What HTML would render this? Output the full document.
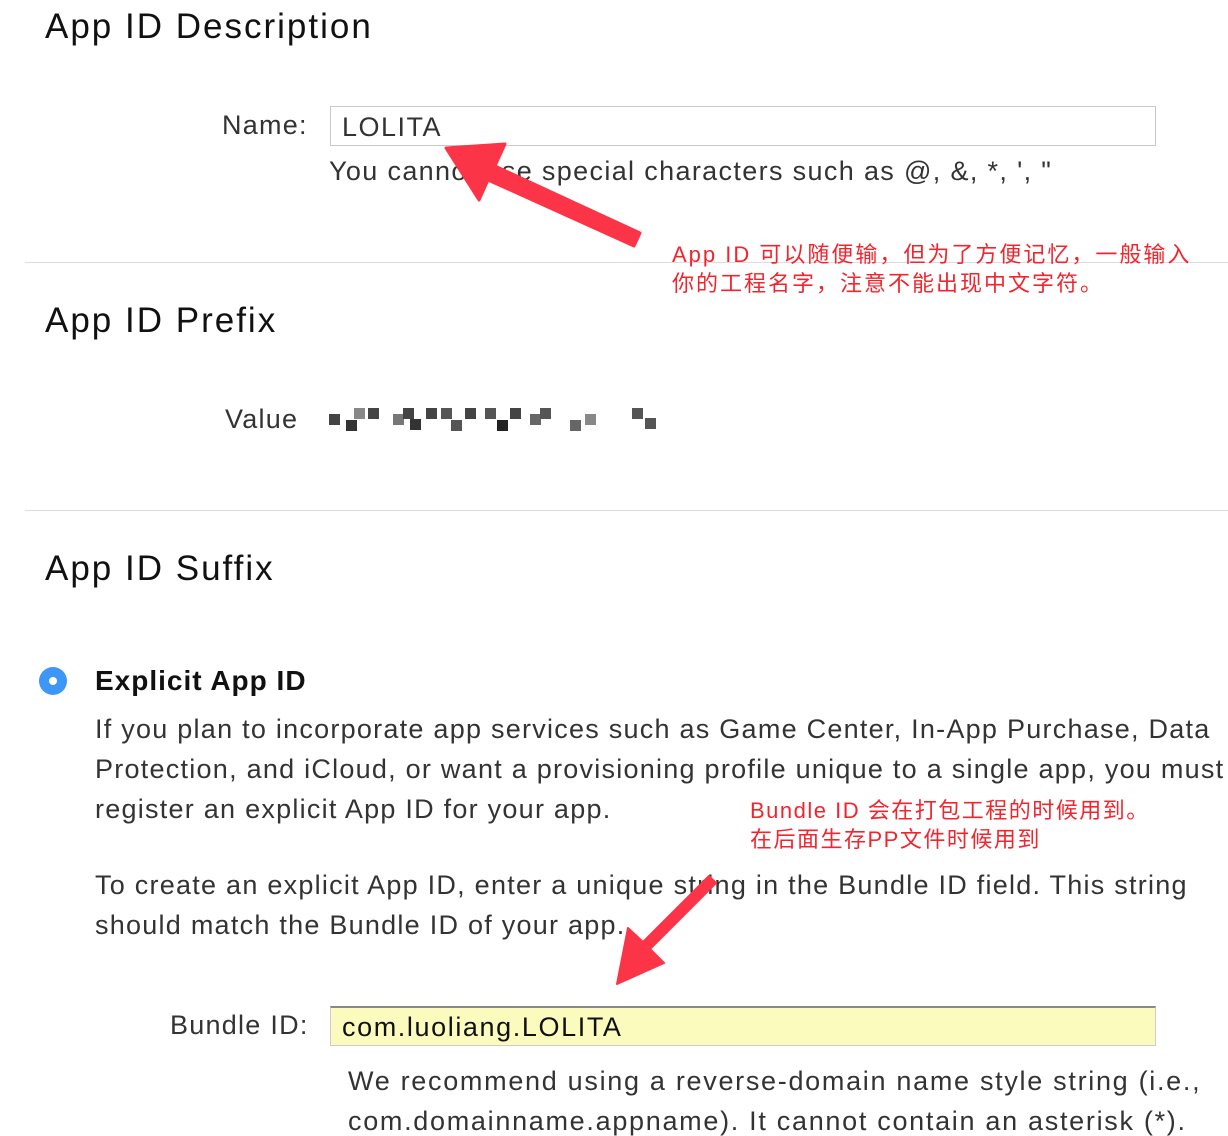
<!DOCTYPE html>
<html><head><meta charset="utf-8"><style>
body{margin:0;width:1228px;height:1136px;background:#fff;position:relative;overflow:hidden;font-family:"Liberation Sans","Noto Sans CJK SC",sans-serif;color:#333}
.a{position:absolute;white-space:nowrap;line-height:1}
h1{position:absolute;margin:0;font-weight:normal;font-size:35px;color:#111;white-space:nowrap;line-height:1;letter-spacing:2px}
.t{font-size:27px;color:#333;letter-spacing:1.25px}
.hr{position:absolute;left:25px;right:0;height:1px;background:#ddd}
.in{position:absolute;left:330px;width:824px;height:38px;border:1px solid #c8c8c8;box-sizing:content-box}
.red{position:absolute;color:#f2252e;font-size:22px;line-height:29px;white-space:nowrap;font-family:"Liberation Sans","Noto Sans CJK SC",sans-serif}
.px{position:absolute;width:11px;height:11px}
</style></head><body>
<h1 style="left:45px;top:9px">App ID Description</h1>
<div class="a t" style="left:222px;top:112px">Name:</div>
<div class="in" style="top:106px"></div>
<div class="a t" style="left:342px;top:114px;color:#333;letter-spacing:1.5px">LOLITA</div>
<div class="a t" style="left:329px;top:158px;letter-spacing:1.35px">You cannot use special characters such as @, &amp;, *, ', "</div>
<div class="hr" style="top:262px"></div>
<div class="red" style="left:672px;top:240px;letter-spacing:2px">App ID 可以随便输，但为了方便记忆，一般输入<br>你的工程名字，注意不能出现中文字符。</div>
<h1 style="left:45px;top:303px">App ID Prefix</h1>
<div class="a t" style="left:225px;top:406px">Value</div>
<div class="px" style="left:329px;top:414px;background:#444"></div>
<div class="px" style="left:346px;top:420px;background:#333"></div>
<div class="px" style="left:354px;top:408px;background:#888"></div>
<div class="px" style="left:368px;top:408px;background:#444"></div>
<div class="px" style="left:393px;top:414px;background:#777"></div>
<div class="px" style="left:403px;top:408px;background:#444"></div>
<div class="px" style="left:410px;top:419px;background:#333"></div>
<div class="px" style="left:426px;top:408px;background:#444"></div>
<div class="px" style="left:441px;top:408px;background:#555"></div>
<div class="px" style="left:451px;top:420px;background:#555"></div>
<div class="px" style="left:465px;top:408px;background:#444"></div>
<div class="px" style="left:485px;top:408px;background:#555"></div>
<div class="px" style="left:497px;top:420px;background:#222"></div>
<div class="px" style="left:510px;top:408px;background:#444"></div>
<div class="px" style="left:530px;top:414px;background:#666"></div>
<div class="px" style="left:540px;top:408px;background:#555"></div>
<div class="px" style="left:570px;top:420px;background:#666"></div>
<div class="px" style="left:585px;top:414px;background:#888"></div>
<div class="px" style="left:632px;top:408px;background:#555"></div>
<div class="px" style="left:645px;top:418px;background:#555"></div>
<div class="hr" style="top:510px"></div>
<h1 style="left:45px;top:551px">App ID Suffix</h1>
<div style="position:absolute;left:39px;top:667px;width:28px;height:28px;border-radius:50%;background:#3d97f7"></div>
<div style="position:absolute;left:49px;top:677px;width:8px;height:8px;border-radius:50%;background:#fff"></div>
<div class="a" style="left:95px;top:667px;font-size:28px;font-weight:bold;color:#111;letter-spacing:1px">Explicit App ID</div>
<div class="a t" style="left:95px;top:716px">If you plan to incorporate app services such as Game Center, In-App Purchase, Data</div>
<div class="a t" style="left:95px;top:756px">Protection, and iCloud, or want a provisioning profile unique to a single app, you must</div>
<div class="a t" style="left:95px;top:796px">register an explicit App ID for your app.</div>
<div class="red" style="left:750px;top:796px;letter-spacing:1.5px">Bundle ID 会在打包工程的时候用到。<br>在后面生存PP文件时候用到</div>
<div class="a t" style="left:95px;top:872px">To create an explicit App ID, enter a unique string in the Bundle ID field. This string</div>
<div class="a t" style="left:95px;top:912px">should match the Bundle ID of your app.</div>
<div class="a t" style="left:170px;top:1012px">Bundle ID:</div>
<div class="in" style="top:1006px;background:#fafbbd;border-color:#ccc;border-top:2px solid #888;height:37px"></div>
<div class="a" style="left:342px;top:1014px;font-size:27px;color:#111;letter-spacing:1.6px">com.luoliang.LOLITA</div>
<div class="a t" style="left:348px;top:1068px;letter-spacing:1.7px">We recommend using a reverse-domain name style string (i.e.,</div>
<div class="a t" style="left:348px;top:1108px;letter-spacing:1.7px">com.domainname.appname). It cannot contain an asterisk (*).</div>
<svg style="position:absolute;left:0;top:0" width="1228" height="1136">
<polygon points="446,148 505,144 495,166 640,233 634,246 488,180 479,200" fill="#fc3447" stroke="#fc3447" stroke-width="3" stroke-linejoin="round"/>
<polygon points="617,984 628,928 643,942 709,876 716,883 650,949 664,963" fill="#fc3447" stroke="#fc3447" stroke-width="2" stroke-linejoin="round"/>
</svg>
</body></html>
